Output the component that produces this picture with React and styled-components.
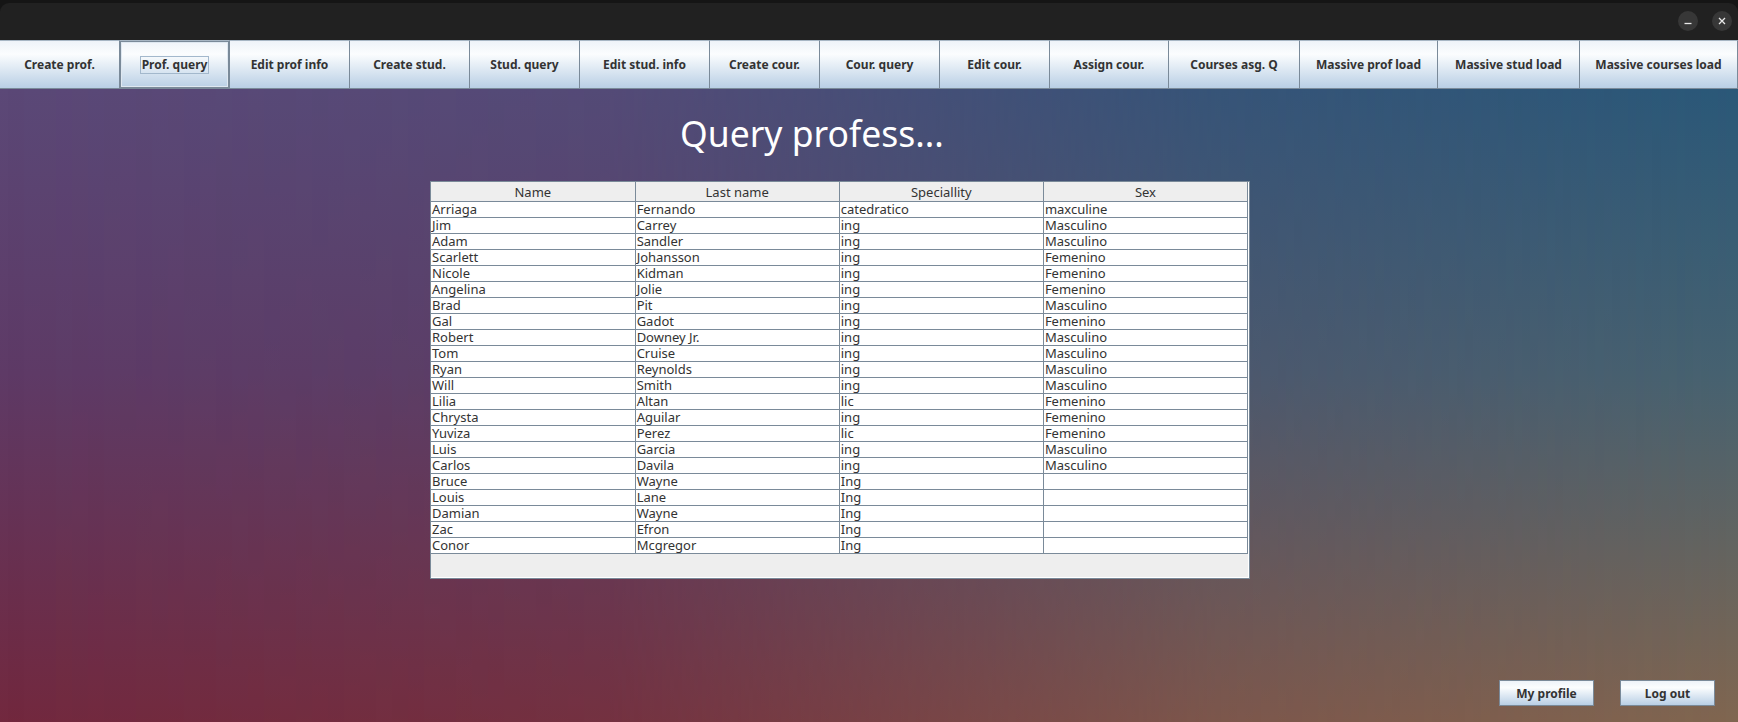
import React from 'react'
import styled, { createGlobalStyle } from 'styled-components'

const GlobalStyle = createGlobalStyle`
  html, body { margin: 0; padding: 0; }
  body { font-family: "Noto Sans", "Open Sans", sans-serif; background: #1b1b1b; }
`

const menu = [
  { label: 'Create prof.', w: 120 },
  { label: 'Prof. query', w: 110, active: true },
  { label: 'Edit prof info', w: 120 },
  { label: 'Create stud.', w: 120 },
  { label: 'Stud. query', w: 110 },
  { label: 'Edit stud. info', w: 130 },
  { label: 'Create cour.', w: 110 },
  { label: 'Cour. query', w: 120 },
  { label: 'Edit cour.', w: 110 },
  { label: 'Assign cour.', w: 119 },
  { label: 'Courses asg. Q', w: 131 },
  { label: 'Massive prof load', w: 138 },
  { label: 'Massive stud load', w: 142 },
  { label: 'Massive courses load', w: 158 },
]

const columns = ['Name', 'Last name', 'Speciallity', 'Sex']

const rows = [
  ['Arriaga', 'Fernando', 'catedratico', 'maxculine'],
  ['Jim', 'Carrey', 'ing', 'Masculino'],
  ['Adam', 'Sandler', 'ing', 'Masculino'],
  ['Scarlett', 'Johansson', 'ing', 'Femenino'],
  ['Nicole', 'Kidman', 'ing', 'Femenino'],
  ['Angelina', 'Jolie', 'ing', 'Femenino'],
  ['Brad', 'Pit', 'ing', 'Masculino'],
  ['Gal', 'Gadot', 'ing', 'Femenino'],
  ['Robert', 'Downey Jr.', 'ing', 'Masculino'],
  ['Tom', 'Cruise', 'ing', 'Masculino'],
  ['Ryan', 'Reynolds', 'ing', 'Masculino'],
  ['Will', 'Smith', 'ing', 'Masculino'],
  ['Lilia', 'Altan', 'lic', 'Femenino'],
  ['Chrysta', 'Aguilar', 'ing', 'Femenino'],
  ['Yuviza', 'Perez', 'lic', 'Femenino'],
  ['Luis', 'Garcia', 'ing', 'Masculino'],
  ['Carlos', 'Davila', 'ing', 'Masculino'],
  ['Bruce', 'Wayne', 'Ing', ''],
  ['Louis', 'Lane', 'Ing', ''],
  ['Damian', 'Wayne', 'Ing', ''],
  ['Zac', 'Efron', 'Ing', ''],
  ['Conor', 'Mcgregor', 'Ing', ''],
]

const Window = styled.div`
  width: 1738px;
  height: 722px;
  display: flex;
  flex-direction: column;
  overflow: hidden;
  background: #151515;
`

const TitleBar = styled.div`
  height: 37px;
  margin-top: 3px;
  background: #212121;
  border-radius: 9px 9px 0 0;
  display: flex;
  align-items: center;
  justify-content: flex-end;
  gap: 14px;
  padding-right: 6px;
`

const WinButton = styled.div`
  width: 20px;
  height: 20px;
  border-radius: 50%;
  background: #373737;
  display: flex;
  align-items: center;
  justify-content: center;
  margin-top: -1px;
`

const Toolbar = styled.div`
  display: flex;
  height: 49px;
  flex-shrink: 0;
`

const MenuButton = styled.div`
  width: ${p => p.w}px;
  box-sizing: border-box;
  display: flex;
  align-items: center;
  justify-content: center;
  font-size: 12px;
  font-weight: 700;
  color: #333333;
  border-top: 1px solid #a7b6c4;
  border-bottom: 1px solid #7a8a99;
  border-right: 1px solid #7a8a99;
  background: linear-gradient(to bottom, #eef3f9 0%, #fbfdfe 28%, #b9cfe5 100%);
  box-shadow: ${p => (p.active ? 'inset 0 0 0 1px #7a8a99, inset 0 0 0 2px #dfe8f1' : 'none')};
  white-space: nowrap;
`

const FocusText = styled.span`
  border: ${p => (p.active ? '1px solid #a3b8cc' : '1px solid transparent')};
  padding: 0 1px;
  line-height: 16px;
`

const Main = styled.div`
  flex: 1;
  position: relative;
  display: flex;
  flex-direction: column;
  background: linear-gradient(to bottom, #5b4877 0%, #5e3a66 45%, #72283e 100%);
  &::before {
    content: '';
    position: absolute;
    inset: 0;
    background: linear-gradient(to bottom, #2a5878 0%, #466270 45%, #806650 100%);
    -webkit-mask-image: linear-gradient(to right, transparent 0%, rgba(0,0,0,0.15) 35%, rgba(0,0,0,0.75) 70%, #000 100%);
    mask-image: linear-gradient(to right, transparent 0%, rgba(0,0,0,0.15) 35%, rgba(0,0,0,0.75) 70%, #000 100%);
  }
  & > * { position: relative; }
`

const Title = styled.h1`
  margin: 24px 0 0 680px;
  font-size: 35.5px;
  line-height: 41px;
  font-weight: 400;
  color: #ffffff;
`

const ScrollPane = styled.div`
  margin: 27px 0 0 430px;
  width: 820px;
  height: 398px;
  box-sizing: border-box;
  border: 1px solid #7a8a99;
  box-shadow: inset -1px -1px 0 #ffffff;
  background: #eeeeee;
  padding: 0 1px 1px 0;
`

const Table = styled.table`
  border-collapse: collapse;
  table-layout: fixed;
  width: 817px;
  font-size: 13px;
  color: #333333;
`

const HeadCell = styled.th`
  height: 19px;
  padding: 0;
  font-weight: 400;
  text-align: center;
  background: #eeeeee;
  border-right: 1px solid #7a8a99;
  border-bottom: 1px solid #7a8a99;
`

const Cell = styled.td`
  height: 15px;
  padding: 0 0 0 1px;
  line-height: 15px;
  background: #ffffff;
  border-right: 1px solid #7a8a99;
  border-bottom: 1px solid #7a8a99;
  white-space: nowrap;
  overflow: hidden;
`

const Footer = styled.div`
  margin-top: auto;
  display: flex;
  justify-content: flex-end;
  gap: 26px;
  padding: 0 23px 16px 0;
`

const ActionButton = styled.div`
  width: 95px;
  height: 26px;
  box-sizing: border-box;
  display: flex;
  align-items: center;
  justify-content: center;
  border: 1px solid #7a8a99;
  background: linear-gradient(to bottom, #eef3f9 0%, #fbfdfe 28%, #b9cfe5 100%);
  font-size: 12px;
  font-weight: 700;
  color: #333333;
`

export default function App() {
  return (
    <Window>
      <GlobalStyle />
      <TitleBar>
        <WinButton>
          <svg width="10" height="10" viewBox="0 0 10 10">
            <line x1="1.5" y1="7.5" x2="8.5" y2="7.5" stroke="#e8e8e8" strokeWidth="1.3" />
          </svg>
        </WinButton>
        <WinButton>
          <svg width="10" height="10" viewBox="0 0 10 10">
            <path d="M2 2 L8 8 M8 2 L2 8" stroke="#e8e8e8" strokeWidth="1.3" />
          </svg>
        </WinButton>
      </TitleBar>
      <Toolbar>
        {menu.map(m => (
          <MenuButton key={m.label} w={m.w} active={m.active}>
            <FocusText active={m.active}>{m.label}</FocusText>
          </MenuButton>
        ))}
      </Toolbar>
      <Main>
        <Title>Query profess...</Title>
        <ScrollPane>
          <Table>
            <thead>
              <tr>
                {columns.map(c => <HeadCell key={c}>{c}</HeadCell>)}
              </tr>
            </thead>
            <tbody>
              {rows.map((r, i) => (
                <tr key={i}>
                  {r.map((v, j) => <Cell key={j}>{v}</Cell>)}
                </tr>
              ))}
            </tbody>
          </Table>
        </ScrollPane>
        <Footer>
          <ActionButton>My profile</ActionButton>
          <ActionButton>Log out</ActionButton>
        </Footer>
      </Main>
    </Window>
  )
}
